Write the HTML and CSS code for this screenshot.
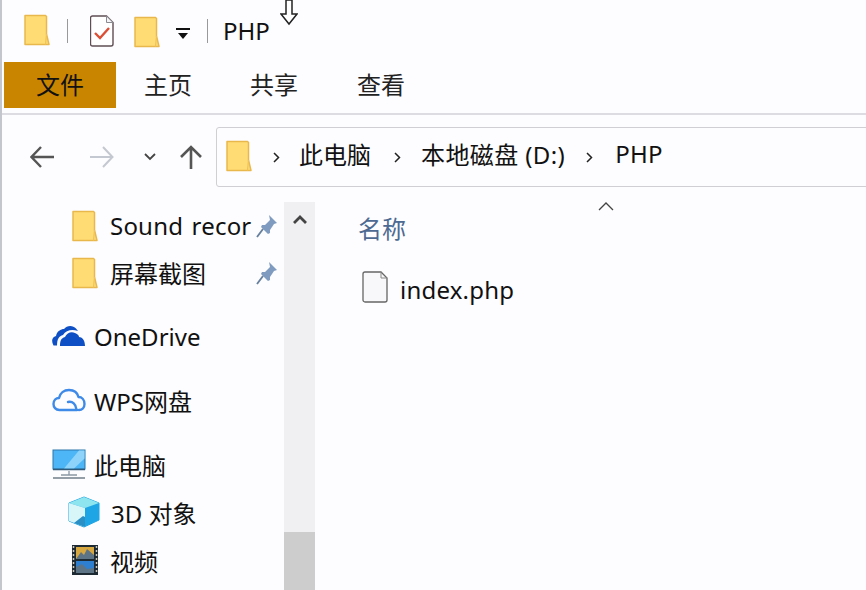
FILE: index.html
```html
<!DOCTYPE html>
<html lang="zh-CN">
<head>
    <meta charset="UTF-8">
    <title>PHP</title>
    <link rel="stylesheet" href="styles.css">
</head>
<body>
    <svg class="defs" width="0" height="0">
        <symbol id="folder" viewBox="0 0 26 32">
            <path d="M1 1.500h20.500l1 1V20l2.500 10.500H1z" fill="#ffdd74" stroke="#e9b84c" stroke-width="1.500" stroke-linejoin="round"/>
            <path d="M22.500 20l-1 10.500" fill="none" stroke="#eec25c" stroke-width="1.200"/>
        </symbol>
        <symbol id="pin" viewBox="0 0 22 24">
            <path d="M13 1l8 8-3 1-4 6 0 3-2 1-7-7 1-2 3 0 5-5z" fill="#7f9cc0"/>
            <path d="M7 15l-6 8" stroke="#66809f" stroke-width="1.800"/>
        </symbol>
    </svg>
    <div class="window">
        <header class="titlebar">
            <svg class="ic-folder ic-folder-1"><use href="#folder"/></svg>
            <span class="sep sep-a"></span>
            <svg class="ic-check" viewBox="0 0 24 32">
                <path d="M2.500 1h14l6.500 6.500V29a2 2 0 0 1-2 2H2.500a2 2 0 0 1-2-2V3a2 2 0 0 1 2-2z" fill="#fff" stroke="#5f4f55" stroke-width="1.400"/>
                <path d="M16.500 1v6.500H23z" fill="#f4f4f6" stroke="#8a8a90" stroke-width="1"/>
                <path d="M5 18l5 5 9-10" fill="none" stroke="#dc4f35" stroke-width="2.400"/>
            </svg>
            <svg class="ic-folder ic-folder-2"><use href="#folder"/></svg>
            <svg class="ic-drop" viewBox="0 0 14 12">
                <rect x="0" y="0" width="14" height="2" fill="#111"/>
                <path d="M2 5h10l-5 6z" fill="#111"/>
            </svg>
            <span class="sep sep-b"></span>
            <span class="title">PHP</span>
        </header>

        <svg class="cursor" viewBox="0 0 18 26">
            <path d="M6 0v14H1l8 10 8-10h-5V0z" fill="#fff" stroke="#222" stroke-width="1.500"/>
        </svg>

        <nav class="ribbon">
            <a class="tab tab-file">文件</a>
            <a class="tab tab-home">主页</a>
            <a class="tab tab-share">共享</a>
            <a class="tab tab-view">查看</a>
        </nav>

        <div class="navbar">
            <svg class="nav-back" viewBox="0 0 24 22"><path d="M24 11H2M11 1 1.500 11 11 21" fill="none" stroke="#555" stroke-width="2.400"/></svg>
            <svg class="nav-forward" viewBox="0 0 24 22"><path d="M0 11h22M13 1l9.500 10L13 21" fill="none" stroke="#c4c8d0" stroke-width="2"/></svg>
            <svg class="nav-recent" viewBox="0 0 12 8"><path d="M1 1l5 5 5-5" fill="none" stroke="#444" stroke-width="1.800"/></svg>
            <svg class="nav-up" viewBox="0 0 22 24"><path d="M11 24V2M1 12 11 2l10 10" fill="none" stroke="#555" stroke-width="2.600"/></svg>
            <div class="address">
                <svg class="ic-folder"><use href="#folder"/></svg>
                <svg class="crumb-arrow arrow-a" viewBox="0 0 7 11"><path d="M1 1l4.500 4.500L1 10" fill="none" stroke="#222" stroke-width="1.500"/></svg>
                <span class="crumb crumb-a">此电脑</span>
                <svg class="crumb-arrow arrow-b" viewBox="0 0 7 11"><path d="M1 1l4.500 4.500L1 10" fill="none" stroke="#222" stroke-width="1.500"/></svg>
                <span class="crumb crumb-b">本地磁盘 (D:)</span>
                <svg class="crumb-arrow arrow-c" viewBox="0 0 7 11"><path d="M1 1l4.500 4.500L1 10" fill="none" stroke="#222" stroke-width="1.500"/></svg>
                <span class="crumb crumb-c">PHP</span>
            </div>
        </div>

        <div class="main">
            <aside class="sidebar">
                <div class="row row-sub row-quick">
                    <svg class="ic-folder"><use href="#folder"/></svg>
                    <span class="label label-clip label-sound">Sound recor</span>
                    <svg class="ic-pin"><use href="#pin"/></svg>
                </div>
                <div class="row row-sub row-quick">
                    <svg class="ic-folder"><use href="#folder"/></svg>
                    <span class="label label-clip">屏幕截图</span>
                    <svg class="ic-pin"><use href="#pin"/></svg>
                </div>
                <div class="row row-top row-drive">
                    <svg class="ic-top ic-onedrive" viewBox="0 0 34 22">
                        <path d="M1.500 20.500C-1 16 0 12 4 11c1-5 5-7 8-7 3-4 9-4 12-.5l2 2.500c-6-2-12-1-15 4-4 1-6 4-6 10.500z" fill="#0f4fc6"/>
                        <path d="M8 21c0-5 1-8 5-9 2-4 6-6 10-4 3 1 4 3 4 4 3 0 6 3 6 9z" fill="#0f4fc6"/>
                    </svg>
                    <span class="label">OneDrive</span>
                </div>
                <div class="row row-top row-wps">
                    <svg class="ic-top ic-wps" viewBox="0 0 34 24">
                        <path d="M25 22H7.500C3.500 22 1.500 19 1.500 16c0-3.500 2.500-6 5.500-6C8 5 12 2 17 2c5 0 8.500 3 9.500 7 3.500 0 6 3 6 7 0 3.500-2.500 6-5.500 6" fill="none" stroke="#3d8ae8" stroke-width="2.400" stroke-linecap="round" stroke-linejoin="round"/>
                        <path d="M16 14c4.500-1 8 2 8.500 7.500" fill="none" stroke="#3d8ae8" stroke-width="2.400" stroke-linecap="round"/>
                    </svg>
                    <span class="label">WPS网盘</span>
                </div>
                <div class="row row-top row-pc">
                    <svg class="ic-top" viewBox="0 0 34 30">
                        <rect x="1" y="1" width="32" height="19" fill="#4db6f6" stroke="#2b76ab" stroke-width="1"/>
                        <path d="M12 19.500 27 1.500h5.500v8L22 19.500z" fill="#8ed3fa"/>
                        <path d="M1 20.500h32" stroke="#2f5a7a" stroke-width="1.500"/>
                        <path d="M17 22v4M9 26h16" stroke="#8a98a4" stroke-width="1.300"/>
                        <path d="M1 29h32" stroke="#6f7f8a" stroke-width="1.500"/>
                    </svg>
                    <span class="label">此电脑</span>
                </div>
                <div class="row row-sub">
                    <svg class="ic-sub" viewBox="0 0 32 32">
                        <path d="M16 1l15 6v17l-15 7-15-6V7z" fill="#1ea5e5" stroke="#1ea5e5" stroke-linejoin="round"/>
                        <path d="M16 1l15 6-14 5L1 7z" fill="#8ee4ef"/>
                        <path d="M1 7l16 5v19L1 25z" fill="#d8f5f8"/>
                        <path d="M6 27l9-7 2 1v10z" fill="#2a8fc4"/>
                    </svg>
                    <span class="label label-3d">3D 对象</span>
                </div>
                <div class="row row-sub">
                    <svg class="ic-sub ic-video" viewBox="0 0 26 30">
                        <rect x="0" y="0" width="26" height="30" fill="#1d2a34"/>
                        <path d="M1.500 1v28M24.500 1v28" stroke="#cfc8b8" stroke-width="1.500" stroke-dasharray="2 2"/>
                        <rect x="4" y="2" width="18" height="12" fill="#d8a840"/>
                        <rect x="4" y="16" width="18" height="12" fill="#2f7fd0"/>
                        <path d="M4 14l5-7 3 3 3-6 7 6v4zM4 22l6-3 5 5 7-1v5H4z" fill="#5d7486"/>
                    </svg>
                    <span class="label">视频</span>
                </div>
            </aside>
            <div class="scrollbar">
                <svg class="scroll-up" viewBox="0 0 14 10"><path d="M1 8l6-6 6 6" fill="none" stroke="#444" stroke-width="2.800"/></svg>
                <div class="scroll-thumb"></div>
            </div>
            <section class="files">
                <svg class="sort-caret" viewBox="0 0 16 9"><path d="M1 8l7-7 7 7" fill="none" stroke="#444" stroke-width="1.300"/></svg>
                <div class="col-name">名称</div>
                <div class="file">
                    <svg class="ic-file" viewBox="0 0 26 32">
                        <path d="M1 3a2 2 0 0 1 2-2h16l6 6v22a2 2 0 0 1-2 2H3a2 2 0 0 1-2-2z" fill="#f8f8fa" stroke="#666" stroke-width="1.300"/>
                        <path d="M19 1v6h6" fill="none" stroke="#888" stroke-width="1"/>
                    </svg>
                    <span class="label label-file">index.php</span>
                </div>
            </section>
        </div>
    </div>
</body>
</html>
```

FILE: styles.css
```css
* {
    margin: 0;
    padding: 0;
    box-sizing: border-box;
}

body {
    background-color: #fdfcfe;
    color: #111;
    font-family: 'Noto Sans', 'Noto Sans CJK SC', sans-serif;
    font-size: 24px;
    overflow: hidden;
}

.defs {
    display: block;
    height: 0;
}

.window {
    position: relative;
    width: 866px;
    height: 590px;
    overflow: hidden;
    border-left: 2px solid #c4c6ce;
}

.ic-folder {
    width: 26px;
    height: 32px;
    flex: none;
}

/* title bar */
.titlebar {
    display: flex;
    align-items: center;
    height: 62px;
    padding-left: 22px;
}

.ic-folder-1 {
    margin-bottom: 2px;
}

.sep {
    width: 1px;
    height: 24px;
    background-color: #999;
    margin-left: 17px;
}

.ic-check {
    width: 24px;
    height: 32px;
    margin-left: 22px;
}

.ic-folder-2 {
    margin-left: 20px;
    margin-top: 2px;
}

.ic-drop {
    width: 14px;
    height: 12px;
    margin-left: 16px;
    margin-top: 6px;
}

.sep-b {
    margin-left: 17px;
}

.title {
    margin-left: 15px;
    line-height: 24px;
}

.cursor {
    position: absolute;
    left: 278px;
    top: 0;
    width: 18px;
    height: 26px;
}

/* ribbon */
.ribbon {
    display: flex;
    height: 53px;
    padding-left: 2px;
    border-bottom: 2px solid #dcdce2;
}

.tab {
    height: 46px;
    line-height: 46px;
    color: #222;
}

.tab-file {
    width: 112px;
    text-align: center;
    background-color: #c98500;
    color: #111;
}

.tab-home {
    margin-left: 28px;
}

.tab-share {
    margin-left: 58px;
}

.tab-view {
    margin-left: 59px;
}

/* nav row */
.navbar {
    display: flex;
    align-items: center;
    height: 87px;
    padding-top: 12px;
    padding-bottom: 15px;
}

.navbar > svg {
    flex: none;
}

.nav-back {
    width: 24px;
    height: 22px;
    margin-left: 28px;
}

.nav-forward {
    width: 24px;
    height: 22px;
    margin-left: 36px;
}

.nav-recent {
    width: 12px;
    height: 8px;
    margin-left: 30px;
}

.nav-up {
    width: 22px;
    height: 24px;
    margin-left: 24px;
}

/* runs off the right edge, like the window it was cut from */
.address {
    display: flex;
    align-items: center;
    flex: none;
    width: 680px;
    height: 60px;
    margin-left: 14px;
    padding-left: 9px;
    border: 1px solid #cfcfd4;
    border-radius: 3px 0 0 3px;
}

.address .ic-folder {
    margin-bottom: 2px;
}

.crumb {
    margin-bottom: 8px;
}

.crumb-arrow {
    width: 7px;
    height: 11px;
    flex: none;
}

.arrow-a {
    margin-left: 21px;
}

.crumb-a {
    margin-left: 19px;
}

.arrow-b {
    margin-left: 23px;
}

.crumb-b {
    margin-left: 20px;
    letter-spacing: 0.4px;
}

.arrow-c {
    margin-left: 21px;
}

.crumb-c {
    margin-left: 22px;
    letter-spacing: 0.3px;
}

/* main area */
.main {
    display: flex;
    height: 388px;
}

.sidebar {
    width: 282px;
    flex: none;
}

.row {
    display: flex;
    align-items: center;
    height: 48px;
}

.row-quick {
    height: 47px;
}

.row-quick .label-clip {
    width: 146px;
    white-space: nowrap;
}

.label-sound {
    letter-spacing: 0.2px;
    word-spacing: 2px;
}

.row-sub {
    padding-left: 70px;
}

.row-top {
    padding-left: 50px;
}

.row-sub .ic-folder {
    margin-right: 12px;
}

.row-drive,
.row-wps,
.row-pc {
    margin-top: 16px;
}

.ic-pin {
    width: 22px;
    height: 24px;
}

.ic-top {
    width: 34px;
    height: 30px;
    margin-right: 8px;
}

.ic-onedrive {
    height: 22px;
}

.ic-wps {
    height: 24px;
}

.ic-sub {
    width: 32px;
    height: 32px;
    margin-right: 11px;
    margin-left: -4px;
}

.ic-video {
    width: 26px;
    height: 30px;
    margin-left: 0;
    margin-right: 12px;
}

.scrollbar {
    display: flex;
    flex-direction: column;
    align-items: center;
    justify-content: space-between;
    width: 31px;
    background-color: #f0f0f2;
    padding-top: 13px;
    flex: none;
}

.scroll-up {
    width: 14px;
    height: 10px;
}

.scroll-thumb {
    width: 100%;
    height: 58px;
    background-color: #cdcdcd;
}

.files {
    position: relative;
    flex: 1;
    padding-left: 43px;
    padding-top: 7px;
}

.sort-caret {
    position: absolute;
    left: 283px;
    top: 0;
    width: 16px;
    height: 9px;
}

.col-name {
    color: #4c6a92;
    line-height: 40px;
}

.file {
    display: flex;
    align-items: center;
    height: 40px;
    margin-top: 20px;
    padding-left: 4px;
}

.ic-file {
    width: 26px;
    height: 32px;
    margin-right: 12px;
    margin-bottom: 4px;
}

.label-file {
    letter-spacing: 0.2px;
}
```
